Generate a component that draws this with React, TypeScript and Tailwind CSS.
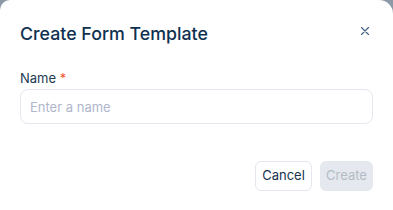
import React from 'react'

const App = () => {
  return (
    <div className="w-[393px] h-[210px] overflow-hidden bg-[#8d99a7] font-['Inter',sans-serif]">
      <div className="h-full bg-white rounded-tl-[10px] rounded-tr-[14px] px-5 pt-5">
        <div className="flex flex-row items-center justify-between">
          <h2 className="text-[17.8px] leading-7 font-medium text-[#0f3150]">
            Create Form Template
          </h2>
          <button className="mr-[3px] -mt-[6px] text-[#3f5f80]">
            <svg width="10" height="10" viewBox="0 0 10 10" fill="none">
              <path
                d="M1.5 1.5L8.5 8.5M8.5 1.5L1.5 8.5"
                stroke="currentColor"
                strokeWidth="1.1"
                strokeLinecap="round"
              />
            </svg>
          </button>
        </div>

        <div className="mt-5 flex flex-col">
          <label className="text-[13px] leading-5 text-[#213a52] mb-[1px]">
            Name <span className="text-[#f0562e]">*</span>
          </label>
          <input
            className="h-[35px] w-full rounded-[8px] border border-[#e4e7ee] px-[9px] text-[13px] text-[#213a52] placeholder:text-[#b0b6cb] outline-none"
            placeholder="Enter a name"
          />
        </div>

        <div className="mt-[37px] flex flex-row justify-end gap-[8px]">
          <button className="h-[30px] w-[57px] rounded-[6px] border border-[#e4e7ee] text-[13px] text-[#16344f]">
            Cancel
          </button>
          <button className="h-[30px] w-[53px] rounded-[6px] bg-[#e5e8ee] text-[13px] text-[#b3bbc6]">
            Create
          </button>
        </div>
      </div>
    </div>
  )
}

export default App
